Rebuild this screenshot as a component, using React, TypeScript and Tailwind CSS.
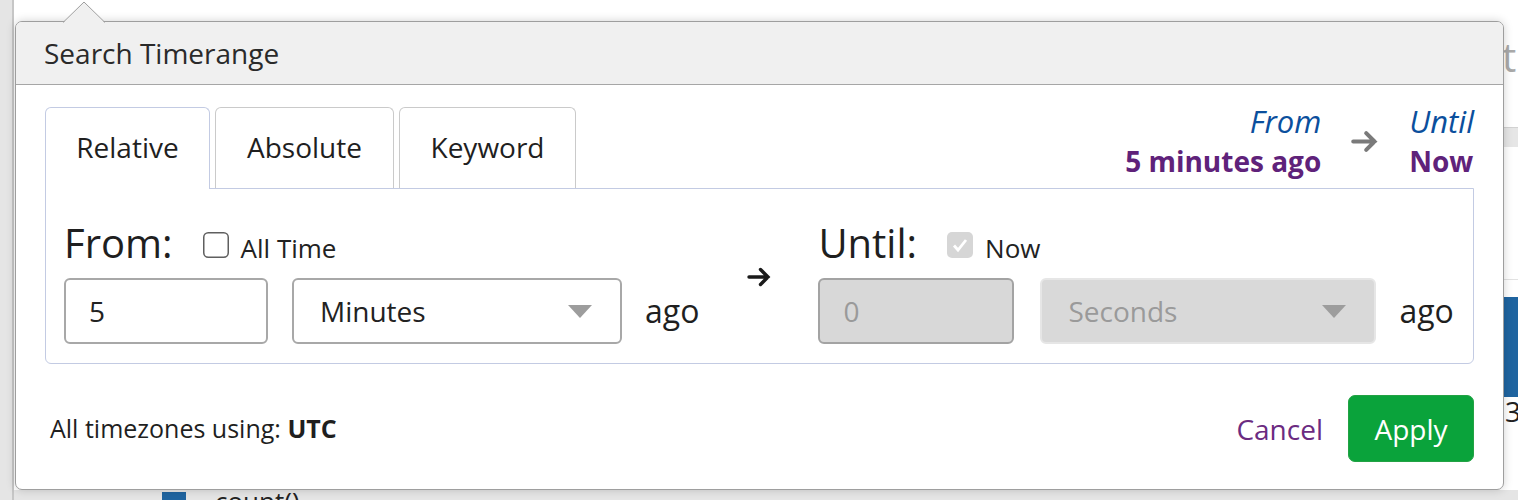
function Caret() {
  return (
    <svg width="24" height="13" viewBox="0 0 24 13" className="shrink-0">
      <path d="M0 0h24L12 13z" fill="#9d9d9d" />
    </svg>
  );
}

function Arrow({ size, color, stroke }: { size: number; color: string; stroke: number }) {
  return (
    <svg width={size} height={size} viewBox="0 0 24 24" className="shrink-0">
      <path
        d="M2 12h19M13.5 4.5 21 12l-7.5 7.5"
        fill="none"
        stroke={color}
        strokeWidth={stroke}
        strokeLinecap="round"
        strokeLinejoin="miter"
      />
    </svg>
  );
}

function Checkbox({ checked }: { checked?: boolean }) {
  if (checked) {
    return (
      <svg width="26" height="26" viewBox="0 0 26 26" className="shrink-0">
        <rect x="0" y="0" width="26" height="26" rx="5" fill="#d6d6d6" />
        <path d="M7 13.5l4 4.5 8-10" fill="none" stroke="#fff" strokeWidth="2.8" />
      </svg>
    );
  }
  return (
    <svg width="26" height="26" viewBox="0 0 26 26" className="shrink-0">
      <rect x="0.75" y="0.75" width="24.5" height="24.5" rx="4.5" fill="#fff" stroke="#5f5f5f" strokeWidth="1.5" />
    </svg>
  );
}

function Tab({ label, active, width }: { label: string; active?: boolean; width: string }) {
  return (
    <div
      className={
        active
          ? `relative z-10 -mb-px flex h-[82px] items-center justify-center rounded-t-[6px] border border-b-0 border-[#c3cbe3] bg-white pb-[4px] ${width}`
          : `flex h-[81px] items-center justify-center rounded-t-[6px] border border-b-0 border-[#cacaca] bg-white pb-[3px] ${width}`
      }
    >
      {label}
    </div>
  );
}

function RangeGroup({
  label,
  checkLabel,
  checked,
  value,
  unit,
  disabled,
  inputWidth,
  selectWidth,
  selectGap,
}: {
  label: string;
  checkLabel: string;
  checked?: boolean;
  value: string;
  unit: string;
  disabled?: boolean;
  inputWidth: string;
  selectWidth: string;
  selectGap: string;
}) {
  return (
    <div className="flex flex-col">
      <div className="flex items-baseline">
        <span className="text-[40px] leading-[48px] text-[#1f1f1f]">{label}</span>
        <span className="ml-[30px]">
          <Checkbox checked={checked} />
        </span>
        <span className="ml-[12px] text-[26px] text-[#222]">{checkLabel}</span>
      </div>
      <div className="mt-[10px] flex items-center">
        <input
          readOnly
          value={value}
          className={
            disabled
              ? `h-[66px] rounded-[6px] border-2 border-[#a3a3a3] bg-[#d8d8d8] pl-[23px] text-[28px] text-[#9a9a9a] outline-none ${inputWidth}`
              : `h-[66px] rounded-[6px] border-2 border-[#a8a8a8] bg-white pl-[23px] text-[28px] text-[#222] outline-none ${inputWidth}`
          }
        />
        <div
          className={
            disabled
              ? `flex h-[66px] items-center justify-between rounded-[6px] border-2 border-[#e6e6e6] bg-[#d9d9d9] pl-[26px] pr-[28px] text-[28px] text-[#9a9a9a] ${selectGap} ${selectWidth}`
              : `flex h-[66px] items-center justify-between rounded-[6px] border-2 border-[#a8a8a8] bg-white pl-[26px] pr-[28px] text-[28px] text-[#222] ${selectGap} ${selectWidth}`
          }
        >
          <span>{unit}</span>
          <Caret />
        </div>
        <span className="ml-[23px] text-[32px] text-[#1f1f1f]">ago</span>
      </div>
    </div>
  );
}

function Popover() {
  return (
    <div className="absolute left-[15px] top-[21px] flex h-[469px] w-[1489px] flex-col rounded-[7px] border border-[#9e9e9e] bg-white shadow-[0_0_10px_rgba(0,0,0,0.18)]">
      <svg className="absolute left-[47px] top-[-21px]" width="42" height="22" viewBox="0 0 42 22">
        <polygon points="0,22 21,1 42,22" fill="#f0f0f0" />
        <polyline points="0,21.5 21,1 42,21.5" fill="none" stroke="#9e9e9e" strokeWidth="1" />
      </svg>

      <div className="flex h-[63px] shrink-0 items-center rounded-t-[6px] border-b border-[#a6a6a6] bg-[#f0f0f0] pl-[28px] text-[28px] text-[#2a2a2a]">
        Search Timerange
      </div>

      <div className="flex flex-1 flex-col px-[29px] pt-[16px]">
        <div className="flex items-end justify-between">
          <div className="flex items-end gap-[5px] text-[28px] text-[#1f1f1f]">
            <Tab label="Relative" active width="w-[165px]" />
            <Tab label="Absolute" width="w-[179px]" />
            <Tab label="Keyword" width="w-[177px]" />
          </div>
          <div className="flex items-center pb-[7px] leading-[40px]">
            <div className="flex flex-col items-end">
              <span className="text-[31px] italic text-[#0b4f9d]">From</span>
              <span className="text-[28px] font-bold text-[#5f227a]">5 minutes ago</span>
            </div>
            <span className="ml-[30px] mr-[31px]">
              <Arrow size={27} color="#7a7a7a" stroke={3.6} />
            </span>
            <div className="flex flex-col items-start">
              <span className="text-[31px] italic text-[#0b4f9d]">Until</span>
              <span className="text-[28px] font-bold text-[#5f227a]">Now</span>
            </div>
          </div>
        </div>

        <div className="flex items-center rounded-b-[6px] border border-[#c3cbe3] pb-[19px] pl-[18px] pt-[30px]">
          <RangeGroup
            label="From:"
            checkLabel="All Time"
            value="5"
            unit="Minutes"
            inputWidth="w-[204px]"
            selectWidth="w-[330px]"
            selectGap="ml-[24px]"
          />
          <span className="mb-[10px] ml-[48px]">
            <Arrow size={24} color="#1a1a1a" stroke={3.4} />
          </span>
          <div className="ml-[47px]">
            <RangeGroup
              label="Until:"
              checkLabel="Now"
              checked
              disabled
              value="0"
              unit="Seconds"
              inputWidth="w-[196px]"
              selectWidth="w-[336px]"
              selectGap="ml-[26px]"
            />
          </div>
        </div>

        <div className="flex items-center justify-between pb-[28px] pl-[5px] pt-[31px]">
          <span className="text-[25px] text-[#1f1f1f]">
            All timezones using: <b className="font-bold">UTC</b>
          </span>
          <div className="flex items-center">
            <span className="mr-[25px] text-[28px] text-[#6b2b81]">Cancel</span>
            <button className="h-[67px] w-[126px] rounded-[7px] border border-[#23a244] bg-[#0aa33b] text-[28px] text-white">
              Apply
            </button>
          </div>
        </div>
      </div>
    </div>
  );
}

export default function App() {
  return (
    <div className="relative flex h-[500px] w-[1518px] overflow-hidden bg-white font-['Open_Sans',sans-serif] text-[#222]">
      <div className="w-[14px] shrink-0 border-r-2 border-[#c6c6c6] bg-[#e5e5e5]" />
      <div className="flex flex-1 flex-col">
        <div className="flex flex-1">
          <div className="flex-1" />
          <div className="flex w-[14px] shrink-0 flex-col overflow-hidden">
            <div className="-ml-[2px] mt-[37px] h-[40px] text-[40px] leading-[40px] text-[#a9a9a9]">t</div>
            <div className="mt-[50px] h-[20px] border-t border-[#d2d2d2] bg-[#e6e6e6]" />
            <div className="mt-[132px] h-px bg-[#e2e2e2]" />
            <div className="mt-[17px] h-[100px] bg-[#1f64a0]" />
            <div className="ml-[1px] text-[28px] leading-[28px] text-[#222]">3</div>
          </div>
        </div>
        <div className="flex h-[10px] shrink-0 items-start overflow-hidden bg-[#e5e5e5] pl-[148px]">
          <span className="mt-[2px] h-[10px] w-[24px] bg-[#1f64a0]" />
          <span className="ml-[29px] text-[26px] leading-[22px] text-[#222]">count()</span>
        </div>
      </div>
      <Popover />
    </div>
  );
}
